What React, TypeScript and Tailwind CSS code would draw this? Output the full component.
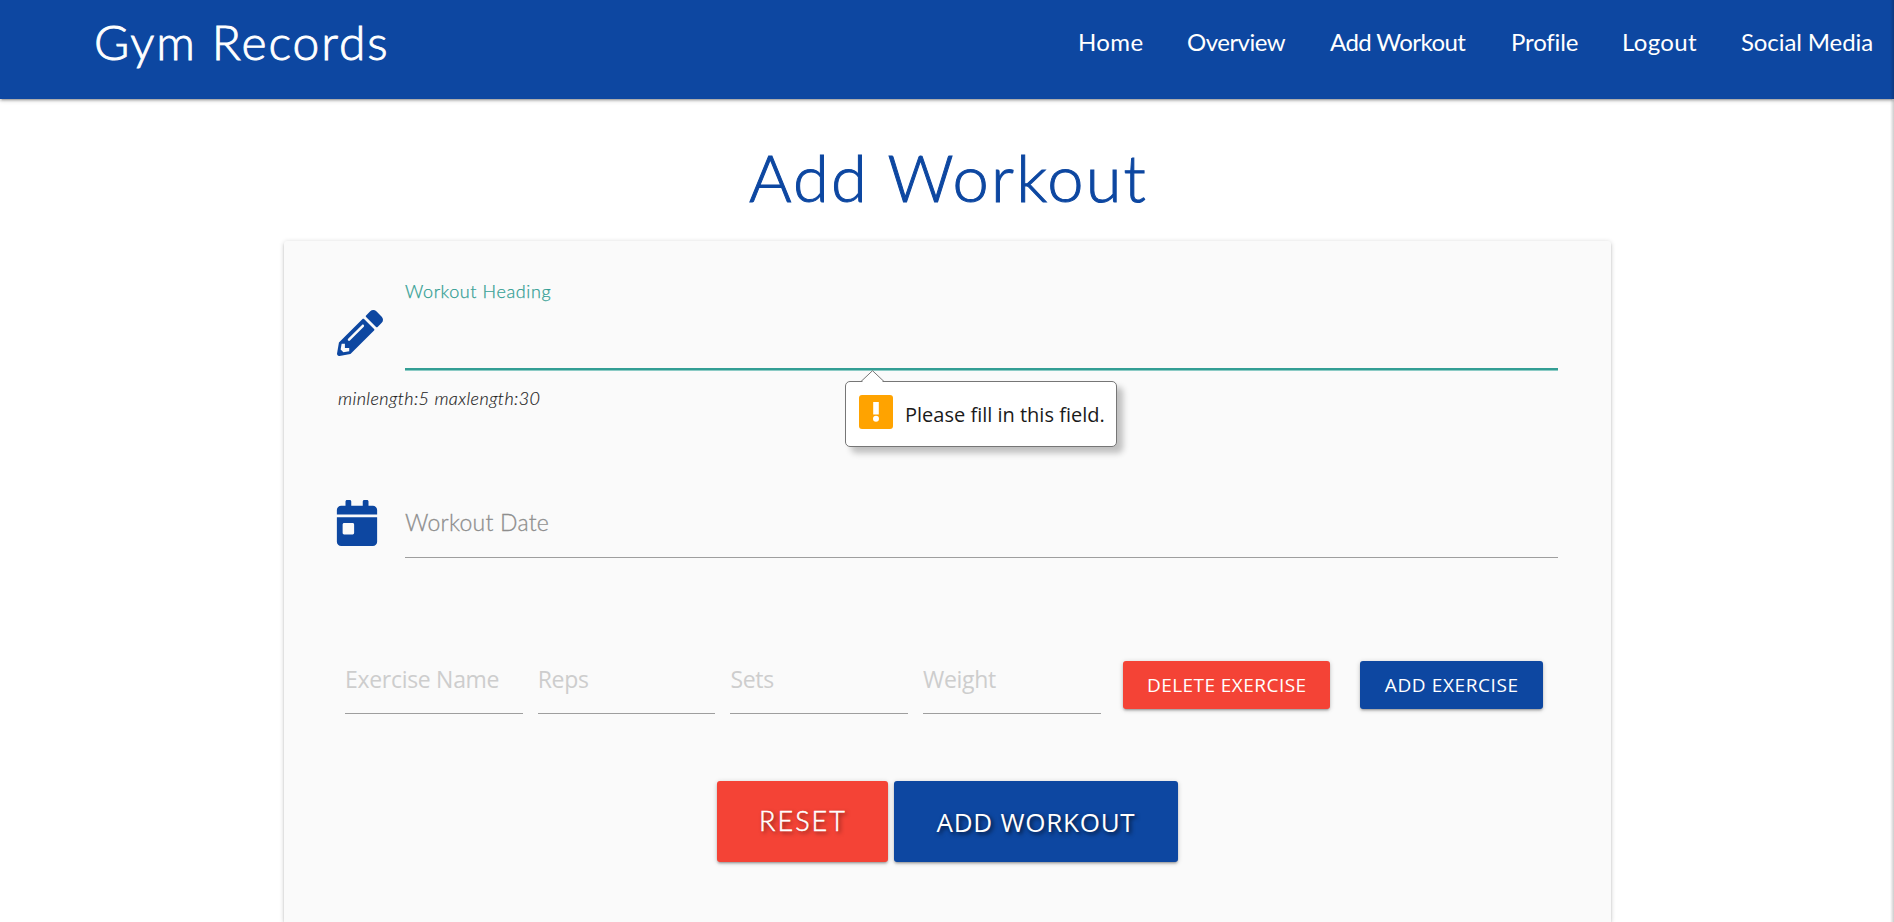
import { FaCalendarDay, FaPencilAlt } from "react-icons/fa";

const navLinks = [
  { label: "Home", className: "tracking-[0.4px] w-[64px]" },
  { label: "Overview", className: "tracking-[-0.5px] w-[98px]" },
  { label: "Add Workout", className: "tracking-[-0.58px] w-[136px]" },
  { label: "Profile", className: "tracking-[-0.15px] w-[66px]" },
  { label: "Logout", className: "tracking-[0.35px] w-[74px]" },
  { label: "Social Media", className: "tracking-[-0.1px] w-[131px]" },
];

const exerciseFields = ["Exercise Name", "Reps", "Sets", "Weight"];

function Header() {
  return (
    <header className="relative z-10 flex h-[99px] shrink-0 items-start justify-between bg-[#0d47a1] pr-[22px] pl-[94px] font-[Lato,sans-serif] text-white shadow-[0_2px_2px_0_rgba(0,0,0,0.14),0_3px_1px_-2px_rgba(0,0,0,0.12),0_1px_5px_0_rgba(0,0,0,0.2)]">
      <a className="text-[48px] leading-[83px] font-light tracking-[1.95px] [-webkit-text-stroke:0.9px_white]">
        Gym Records
      </a>
      <nav className="flex gap-[45px] text-2xl leading-[84px] whitespace-nowrap">
        {navLinks.map((link) => (
          <a key={link.label} className={link.className}>
            {link.label}
          </a>
        ))}
      </nav>
    </header>
  );
}

function ValidationBubble() {
  return (
    <div className="absolute top-[101px] left-[508px] flex h-[66px] w-[272px] rounded-[5px] border border-[#767676] bg-white pt-[13px] pl-[13px] shadow-[6px_6px_6px_rgba(0,0,0,0.24)]">
      <svg className="absolute -top-[12px] left-[14px]" width="26" height="13" viewBox="0 0 26 13">
        <path d="M1 13 L12.5 1 L24 13" fill="white" />
        <path d="M1 11.5 L12.5 0.7 L24 11.5" fill="none" stroke="#767676" />
      </svg>
      <svg width="34" height="34" viewBox="0 0 34 34" className="shrink-0">
        <rect width="34" height="34" rx="3" fill="#ffa300" />
        <rect x="14.2" y="7" width="5.6" height="12.5" fill="white" />
        <circle cx="17" cy="23.8" r="3" fill="white" />
      </svg>
      <span className="ml-[12px] font-['Open_Sans',sans-serif] text-[20px] leading-[40px] whitespace-nowrap text-[#1a1a1a]">
        Please fill in this field.
      </span>
    </div>
  );
}

export default function App() {
  return (
    <div className="relative flex h-screen flex-col overflow-hidden bg-white font-[Lato,sans-serif]">
      <Header />
      <h1 className="h-[142px] shrink-0 pt-4 pl-[3px] text-center text-[65px] leading-[125px] font-light tracking-[2.2px] text-[#0d47a1] [-webkit-text-stroke:1px_#0d47a1]">
        Add Workout
      </h1>

      <main className="ml-[284px] w-[1327px] flex-1 rounded-t-[3px] bg-[#fafafa] px-[53px] pt-[39px] shadow-[0_2px_2px_0_rgba(0,0,0,0.14),0_3px_1px_-2px_rgba(0,0,0,0.12),0_1px_5px_0_rgba(0,0,0,0.2)]">
        <div className="relative flex">
          <div className="w-[68px] shrink-0 pt-[30px]">
            <FaPencilAlt size={46} color="#0d47a1" />
          </div>
          <label className="flex-1">
            <span className="block text-[18px] leading-[23px] font-light tracking-[0.6px] text-[#339e94] [-webkit-text-stroke:0.25px_#339e94]">
              Workout Heading
            </span>
            <input className="block h-[67px] w-full border-b-2 border-[#339e94] shadow-[0_1px_0_0_#8ccbc5] outline-none" />
          </label>
          <ValidationBubble />
        </div>
        <p className="mt-4 ml-px text-[18px] leading-[25px] font-light tracking-[0.4px] text-[#222] italic [-webkit-text-stroke:0.15px_#222]">
          minlength:5 maxlength:30
        </p>

        <div className="mt-[88px] flex h-[59px]">
          <div className="w-[68px] shrink-0">
            <FaCalendarDay size={46} color="#0d47a1" className="-ml-[3px] mt-px" />
          </div>
          <div className="flex-1 border-b border-[#9e9e9e] pt-2 text-[23px] leading-[31px] font-light tracking-[0.25px] text-[#8e8e8e] [-webkit-text-stroke:0.3px_#8e8e8e]">
            Workout Date
          </div>
        </div>

        <div className="mt-[103px] flex h-[53px] items-start pl-2 font-['Open_Sans',sans-serif]">
          <div className="flex gap-[15px]">
            {exerciseFields.map((field) => (
              <input
                key={field}
                placeholder={field}
                className="h-[53px] w-[177.7px] border-b border-[#9e9e9e] pb-[16px] text-[23px] tracking-[-0.3px] outline-none placeholder:text-[#cdcdcd]"
              />
            ))}
          </div>
          <button className="ml-[22.5px] h-12 w-[207px] rounded-[3px] bg-[#f44336] pt-px text-[19px] tracking-[0.45px] whitespace-nowrap text-white shadow-[0_2px_2px_0_rgba(0,0,0,0.14),0_3px_1px_-2px_rgba(0,0,0,0.12),0_1px_5px_0_rgba(0,0,0,0.2)]">
            DELETE EXERCISE
          </button>
          <button className="ml-[30px] h-12 w-[183px] rounded-[3px] bg-[#0d47a1] pt-px text-[19px] tracking-[0.6px] whitespace-nowrap text-white shadow-[0_2px_2px_0_rgba(0,0,0,0.14),0_3px_1px_-2px_rgba(0,0,0,0.12),0_1px_5px_0_rgba(0,0,0,0.2)]">
            ADD EXERCISE
          </button>
        </div>

        <div className="mt-[67px] flex justify-center gap-[6px] text-white">
          <button className="h-[81px] w-[171px] rounded-[3px] bg-[#f44336] pl-px text-[27px] font-light tracking-[2px] shadow-[0_2px_2px_0_rgba(0,0,0,0.14),0_3px_1px_-2px_rgba(0,0,0,0.12),0_1px_5px_0_rgba(0,0,0,0.2)] [-webkit-text-stroke:0.5px_white] [text-shadow:2px_2px_4px_rgba(0,0,0,0.6)]">
            RESET
          </button>
          <button className="h-[81px] w-[284px] rounded-[3px] bg-[#0d47a1] pt-px font-['Open_Sans',sans-serif] text-[26px] tracking-[0.75px] shadow-[0_2px_2px_0_rgba(0,0,0,0.14),0_3px_1px_-2px_rgba(0,0,0,0.12),0_1px_5px_0_rgba(0,0,0,0.2)] [text-shadow:2px_2px_4px_rgba(0,0,0,0.7)]">
            ADD WORKOUT
          </button>
        </div>
      </main>

      <div className="absolute inset-y-0 right-0 z-20 w-[4px] bg-linear-to-r from-transparent to-black/20" />
    </div>
  );
}
